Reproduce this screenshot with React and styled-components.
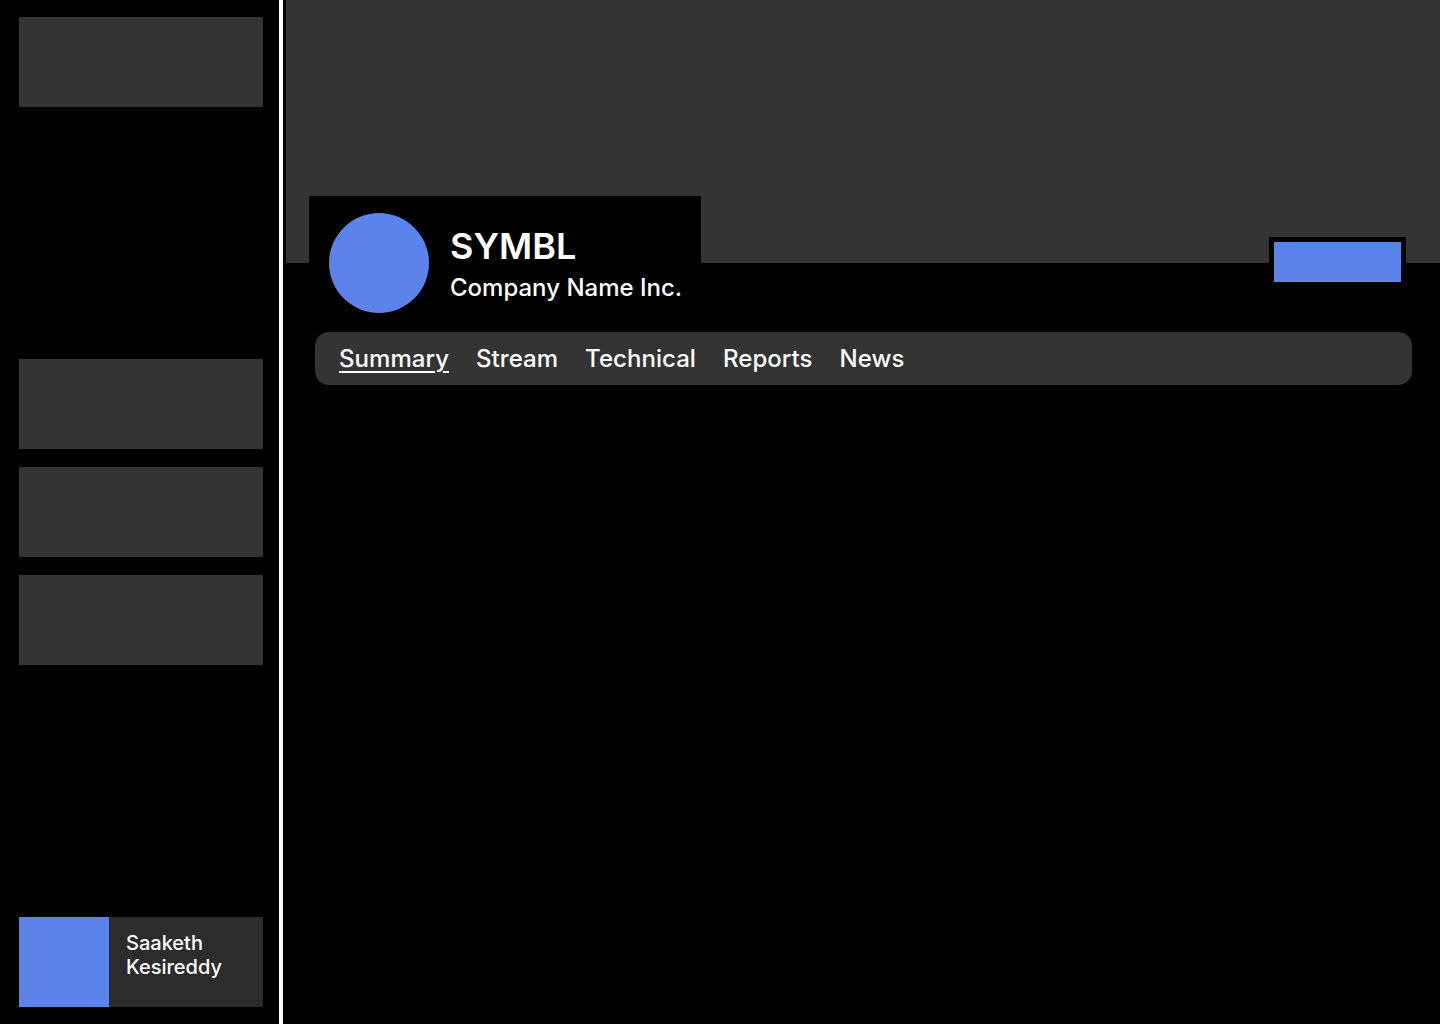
import React from 'react';
import styled, { createGlobalStyle } from 'styled-components';

const tabs = ['Summary', 'Stream', 'Technical', 'Reports', 'News'];

function App() {
    return (
        <>
            <GlobalStyle />
            <Page>
                <Sidebar>
                    <NavCard />
                    <NavGroup>
                        <NavCard />
                        <NavCard />
                        <NavCard />
                    </NavGroup>
                    <UserCard>
                        <Avatar />
                        <UserName>Saaketh<br />Kesireddy</UserName>
                    </UserCard>
                </Sidebar>
                <Divider />
                <Main>
                    <Banner />
                    <ProfileRow>
                        <Identity>
                            <Logo />
                            <Names>
                                <Ticker>SYMBL</Ticker>
                                <Company>Company Name Inc.</Company>
                            </Names>
                        </Identity>
                        <ButtonFrame>
                            <ActionButton />
                        </ButtonFrame>
                    </ProfileRow>
                    <TabBar>
                        {tabs.map((t, i) => (
                            <Tab key={t} active={i === 0}>{t}</Tab>
                        ))}
                    </TabBar>
                </Main>
            </Page>
        </>
    )
}

const GlobalStyle = createGlobalStyle`
    html, body {
        margin: 0 ;
        padding: 0 ;
        background: #000 ;
    }
    body {
        font-family: Inter, "Noto Sans", sans-serif ;
        color: #fff ;
    }
`;
const Page = styled.div`
    display: flex ;
    height: 1024px ;
    background: #000 ;
    overflow: hidden ;
`;
const Sidebar = styled.div`
    width: 279px ;
    box-sizing: border-box ;
    padding: 17px 16px 17px 19px ;
    display: flex ;
    flex-direction: column ;
    flex-shrink: 0 ;
`;
const NavCard = styled.div`
    width: 244px ;
    height: 90px ;
    background: #343434 ;
`;
const NavGroup = styled.div`
    display: flex ;
    flex-direction: column ;
    gap: 18px ;
    margin-top: 252px ;
`;
const UserCard = styled.div`
    margin-top: auto ;
    width: 244px ;
    height: 90px ;
    display: flex ;
    background: #2c2c2c ;
`;
const Avatar = styled.div`
    width: 90px ;
    height: 90px ;
    background: #5b83ea ;
`;
const UserName = styled.div`
    padding: 14px 0 0 17px ;
    font-size: 20px ;
    font-weight: 500 ;
    line-height: 24px ;
`;
const Divider = styled.div`
    width: 4px ;
    background: #fff ;
    margin-right: 3px ;
    flex-shrink: 0 ;
`;
const Main = styled.div`
    flex: 1 ;
    display: flex ;
    flex-direction: column ;
`;
const Banner = styled.div`
    height: 263px ;
    background: #343434 ;
`;
const ProfileRow = styled.div`
    margin-top: -67px ;
    padding: 0 34px 0 23px ;
    display: flex ;
    justify-content: space-between ;
    align-items: flex-start ;
`;
const Identity = styled.div`
    width: 392px ;
    box-sizing: border-box ;
    padding: 17px 20px 0 ;
    display: flex ;
    align-items: flex-start ;
    background: #000 ;
`;
const Logo = styled.div`
    width: 100px ;
    height: 100px ;
    border-radius: 50% ;
    background: #5b83ea ;
    flex-shrink: 0 ;
`;
const Names = styled.div`
    margin: 11px 0 0 21px ;
    display: flex ;
    flex-direction: column ;
`;
const Ticker = styled.div`
    font-size: 36px ;
    font-weight: 600 ;
    line-height: 44px ;
`;
const Company = styled.div`
    margin-top: 5px ;
    font-size: 24px ;
    font-weight: 500 ;
    line-height: 29px ;
    white-space: nowrap ;
`;
const ButtonFrame = styled.div`
    margin-top: 41px ;
    padding: 5px 5px 0 ;
    background: #000 ;
`;
const ActionButton = styled.div`
    width: 127px ;
    height: 40px ;
    background: #5b83ea ;
`;
const TabBar = styled.div`
    margin: 19px 28px 0 29px ;
    height: 53px ;
    border-radius: 14px ;
    background: #343434 ;
    display: flex ;
    align-items: center ;
    gap: 27px ;
    padding: 0 24px ;
`;
const Tab = styled.div`
    font-size: 24px ;
    font-weight: 500 ;
    line-height: 29px ;
    letter-spacing: 0.05px ;
    text-decoration: ${p => p.active ? 'underline' : 'none'} ;
    text-decoration-thickness: 2px ;
    text-underline-offset: 4px ;
`;

export default App
